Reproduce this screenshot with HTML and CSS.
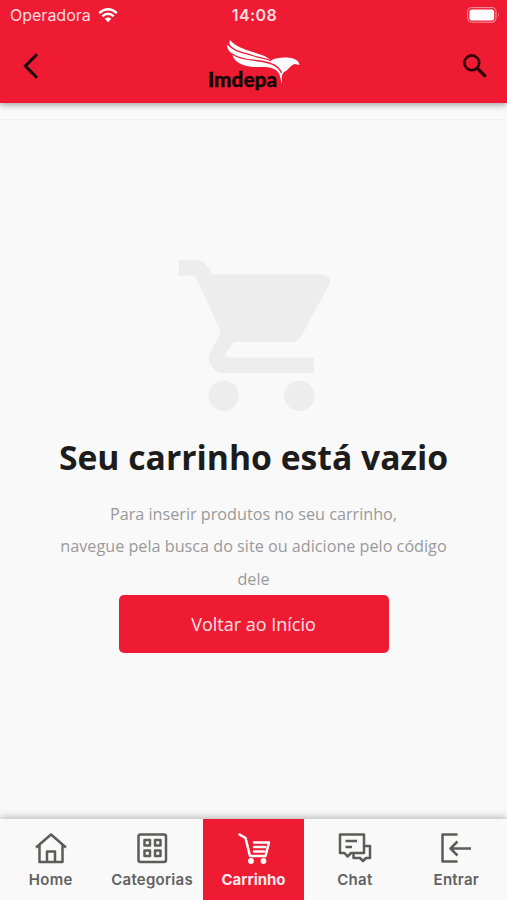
FILE: index.html
```html
<!DOCTYPE html>
<html lang="pt">
<head>
    <meta charset="UTF-8">
    <meta name="viewport" content="width=device-width, initial-scale=1.0">
    <title>Imdepa - Carrinho</title>
    <link rel="stylesheet" href="styles.css">
</head>
<body>

    <header class="topo">
        <div class="status">
            <div class="operadora">
                <span>Operadora</span>
                <svg class="wifi" viewBox="0 0 20 15">
                    <path d="M1.2 5.1Q10-2.5 18.8 5.1M4.3 8.2Q10 3.3 15.7 8.2" fill="none" stroke="#fff" stroke-width="2.5"/>
                    <path d="M6.7 10.8Q10 8.2 13.3 10.8L10 14.2Z" fill="#fff"/>
                </svg>
            </div>
            <span class="hora">14:08</span>
            <svg class="bateria" viewBox="0 0 33 16">
                <rect x=".6" y=".6" width="28.4" height="14.6" rx="4" fill="none" stroke="#ff9aa5"/>
                <rect x="2.4" y="2.6" width="24.8" height="10.8" rx="2.5" fill="#fff"/>
                <path d="M31 5.4Q32.6 8 31 10.4Z" fill="#ff9aa5"/>
            </svg>
        </div>
        <div class="barra">
            <svg class="voltar" viewBox="0 0 16 28"><path d="M14 2.2L2.4 14 14 25.8" fill="none" stroke="#170608" stroke-width="3"/></svg>
            <svg class="logo" viewBox="205 38 98 56">
                <path d="M229 40C233 45 239 47.500 247 50.500C255 53.500 264 54.500 270 60.500C276 57 286 57 292 58.500C295.500 59.500 298 61.500 298.500 65L293.500 64C289 65.500 287.500 70 284 71.500C281 73 280.500 76 281 84C279 79 280 73 274 69.500C267 65 256 68.500 246 66C238 64 232 60 231.500 54.500L235 56C229.500 53 226 50 226 44.500L230 47.500C228.500 45 228 42.500 229 40Z" fill="#fff"/>
                <g class="penas">
                    <path d="M227 44C233 52 243 52.500 253 56C261 58.500 266 58.500 270 61"/>
                    <path d="M231 54C240 60 249 59.500 259 61C270 62.500 278 66 280.500 73"/>
                </g>
                <text x="207" y="86.500" textLength="69" lengthAdjust="spacingAndGlyphs" class="marca">Imdepa</text>
            </svg>
            <svg class="lupa" viewBox="0 0 24 24">
                <circle cx="8.800" cy="8.800" r="7.400" fill="none" stroke="#300008" stroke-width="2.600"/>
                <path d="M14 14L22.700 22.700" stroke="#300008" stroke-width="3.200"/>
            </svg>
        </div>
    </header>

    <main class="vazio">
        <svg class="carrinho-vazio" viewBox="179 260 152 151" fill="#ededed">
            <path d="M179 260H196Q206 260 212 274.500H322Q332 276 329.500 284L305 329Q300 342 292 342H234L225 354Q225 357.500 229 357.500H314V373H221Q217 373 214 369L210 364Q208 361 209 355L220 334V330L195 275.500H179Z"/>
            <circle cx="223.700" cy="395.800" r="15.200"/>
            <circle cx="299.300" cy="395.800" r="15.200"/>
        </svg>
        <h1>Seu carrinho está vazio</h1>
        <p>Para inserir produtos no seu carrinho,<br>navegue pela busca do site ou adicione pelo código<br>dele</p>
        <button class="botao">Voltar ao Início</button>
    </main>

    <nav class="menu">
        <a class="item">
            <svg viewBox="0 0 34 32"><path d="M2 15.500L17 2.500 32 15.500M5.500 13V30H28.500V13M13 30V19.500H21V30" /></svg>
            <span>Home</span>
        </a>
        <a class="item">
            <svg viewBox="0 0 34 32"><rect x="3.500" y="2.500" width="27.500" height="27.500" rx="2"/><path d="M9.500 8H15V13.500H9.500ZM20 8H25.500V13.500H20ZM9.500 18.500H15V24H9.500ZM20 18.500H25.500V24H20Z"/></svg>
            <span>Categorias</span>
        </a>
        <a class="item ativo">
            <svg viewBox="0 0 34 32"><path d="M3.500 2.500L9.500 6 14 24H29.500L33 10.500H18M18 15H29M18 19.500H28"/><g fill="#fff" stroke="none"><circle cx="15" cy="29" r="2.900"/><circle cx="27.500" cy="29" r="2.900"/></g></svg>
            <span>Carrinho</span>
        </a>
        <a class="item">
            <svg viewBox="0 0 34 32"><path d="M2 2.500H26V21H13L9.500 24.500 6.500 21H2ZM7.500 9H19M7.500 15H14M26 14H32V26H28L25 29 22 26H15.500V21"/></svg>
            <span>Chat</span>
        </a>
        <a class="item">
            <svg viewBox="0 0 34 32"><path d="M18.500 2.500H3.500V29.500H18.500M32 16.500H11.500M18.500 9.500L11.500 16.500 18.500 23.500"/></svg>
            <span>Entrar</span>
        </a>
    </nav>

</body>
</html>
```
FILE: styles.css
```css
* {
    box-sizing: border-box;
}

body {
    margin: 0;
    height: 900px;
    display: flex;
    flex-direction: column;
    background-color: #f9f9f9;
    font-family: 'Open Sans', sans-serif;
    overflow: hidden;
}

svg {
    display: block;
    flex: none;
}

.topo {
    height: 103px;
    background-color: #ee1b32;
    box-shadow: 0 2px 6px rgba(0, 0, 0, 0.35);
}

.status {
    height: 30px;
    padding: 0 8px 0 10px;
    display: grid;
    grid-template-columns: 1fr auto 1fr;
    align-items: center;
    color: #ffdce0;
    font-family: Inter, sans-serif;
    font-size: 16px;
}

.operadora {
    display: flex;
    align-items: center;
    gap: 7px;
}

.wifi {
    width: 20px;
    height: 15px;
}

.hora {
    font-weight: 600;
    letter-spacing: 0.4px;
}

.bateria {
    width: 33px;
    height: 16px;
    justify-self: end;
    margin-right: -1px;
    margin-top: -1px;
}

.barra {
    height: 73px;
    padding: 0 20px 0 23px;
    display: grid;
    grid-template-columns: 1fr auto 1fr;
    align-items: center;
}

.voltar {
    width: 16px;
    height: 28px;
    margin-top: -2px;
}

.logo {
    width: 98px;
    height: 56px;
    margin-top: -1px;
    margin-left: -1px;
}

.penas {
    fill: none;
    stroke: #ee1b32;
    stroke-width: 1.3px;
}

.marca {
    font: 900 20px Lato, sans-serif;
    fill: #120407;
    stroke: #120407;
    stroke-width: 0.3px;
}

.lupa {
    width: 24px;
    height: 24px;
    justify-self: end;
    margin-top: -2px;
}

.vazio {
    flex: 1;
    margin-top: 16px;
    border-top: 1px solid #f0f0f0;
    display: flex;
    flex-direction: column;
    align-items: center;
    padding-top: 140px;
    text-align: center;
}

.carrinho-vazio {
    width: 152px;
    height: 151px;
    margin-left: 2px;
}

h1 {
    margin: 22px 0 0;
    font-size: 33.7px;
    line-height: 48px;
    color: #1c1c1c;
    white-space: nowrap;
}

p {
    margin: 17px 0 0;
    font-size: 16.2px;
    line-height: 32.4px;
    color: #999;
    white-space: nowrap;
}

.botao {
    width: 270px;
    height: 58px;
    margin: 0;
    padding: 0;
    border: 0;
    border-radius: 5px;
    background-color: #ee1b32;
    color: #ffe3e6;
    font-family: 'Open Sans', sans-serif;
    font-size: 18px;
}

.menu {
    height: 81px;
    display: grid;
    grid-template-columns: repeat(5, 1fr);
    background-color: #f9f9f9;
    box-shadow: 0 -2px 7px rgba(0, 0, 0, 0.25);
}

.item {
    display: flex;
    flex-direction: column;
    align-items: center;
    padding-top: 13px;
    color: #616161;
    font: 600 15px/20px Inter, sans-serif;
    letter-spacing: 0.25px;
}

.item svg {
    width: 34px;
    height: 32px;
    margin-bottom: 6px;
    fill: none;
    stroke: #5c5c59;
    stroke-width: 2.5;
    stroke-linejoin: round;
}

.ativo {
    background-color: #ee1b32;
    color: #ffe9eb;
    font-weight: 700;
    letter-spacing: 0;
}

.ativo svg {
    stroke: #fff;
    stroke-linecap: round;
}
```
